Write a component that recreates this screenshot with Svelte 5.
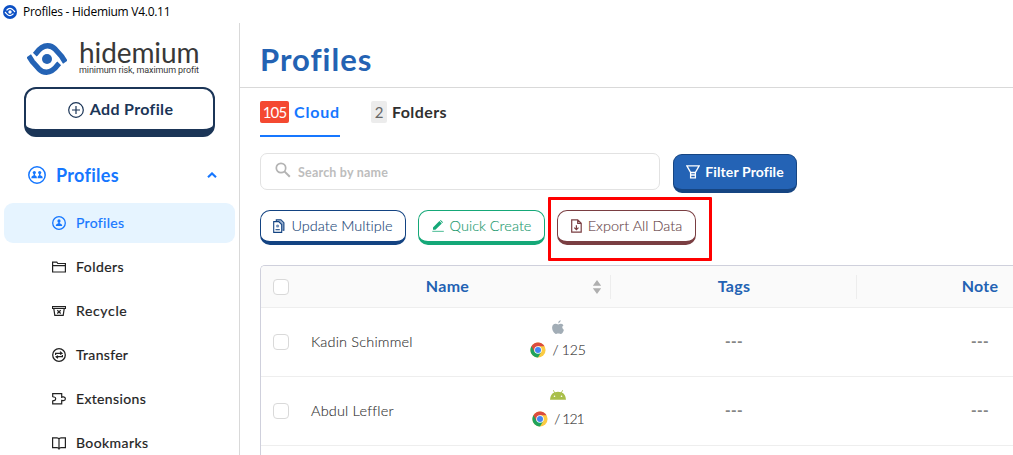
<script>
  const menu = [
    { label: 'Profiles', icon: 'user', active: true, ls: 0.32 },
    { label: 'Folders', icon: 'folder', ls: 0.46 },
    { label: 'Recycle', icon: 'recycle', ls: 0.66 },
    { label: 'Transfer', icon: 'transfer', ls: 0.32 },
    { label: 'Extensions', icon: 'extension', ls: 0.36 },
    { label: 'Bookmarks', icon: 'book', ls: 0.42 }
  ];
  const rows = [
    { name: 'Kadin Schimmel', os: 'apple', version: '125' },
    { name: 'Abdul Leffler', os: 'android', version: '121' }
  ];
</script>

<div class="window">
  <div class="titlebar">
    <svg width="14" height="14" viewBox="0 0 14 14">
      <circle cx="7" cy="7" r="7" fill="#0b4fc4" />
      <g fill="none" stroke="#fff" stroke-width="1.2">
        <path d="M3.5 5.4Q7 1.4 10.3 5.2L12 7M2 7l1.7 1.8Q7 12.4 10.5 8.6" />
      </g>
      <circle cx="7" cy="7" r="1.7" fill="#fff" />
    </svg>
    <span>Profiles - Hidemium V4.0.11</span>
  </div>

  <div class="body">
    <aside>
      <div class="brand">
        <svg width="40" height="32" viewBox="0 0 40 32">
          <g fill="none" stroke="#2463b5" stroke-width="5.4">
            <path d="M7.800 11.600 8.600 10.800Q14.500 2.800 20.500 2.800 25 2.800 28.200 6.200L34.500 13.300 38.300 19.200" stroke-linejoin="round" />
            <path d="M32.200 20.400 31.400 21.200Q25.500 29.200 19.500 29.200 15 29.200 11.800 25.800L5.500 18.700 1.700 12.800" stroke-linejoin="round" />
          </g>
          <circle cx="20" cy="16" r="5" fill="#2463b5" />
        </svg>
        <div class="words">
          <div class="word">hidemium</div>
          <div class="slogan">minimum risk, maximum profit</div>
        </div>
      </div>

      <button class="add">
        <svg width="16" height="16" viewBox="0 0 16 16" fill="none" stroke="#1b3557" stroke-width="1.2">
          <circle cx="8" cy="8" r="7.300" /><path d="M8 4v8M4 8h8" />
        </svg>
        <span>Add Profile</span>
      </button>

      <div class="group">
        <svg width="18" height="18" viewBox="0 0 18 18" fill="#1677ff">
          <circle cx="9" cy="9" r="8.200" fill="none" stroke="#1677ff" stroke-width="1.500" />
          <circle cx="6.300" cy="6.600" r="1.600" /><circle cx="11.700" cy="6.600" r="1.600" />
          <path d="M5.600 7.800h1.400v1.500q2 .4 2 2.900H3.200q0-2.500 2.400-2.900zM11 7.800h1.400v1.500q2.400.4 2.400 2.900H9.500q0-2.500 1.500-2.900z" />
        </svg>
        <span>Profiles</span>
        <svg class="caret" width="10" height="6" viewBox="0 0 10 6" fill="none" stroke="#1677ff" stroke-width="2.100"><path d="M1 5.200 5 1.400 9 5.200" /></svg>
      </div>

      <nav>
        {#each menu as m}
          <div class="item" class:active={m.active}>
            <svg width="14" height="14" viewBox="0 0 14 14" fill="none" stroke="currentColor" stroke-width="1.200">
              {#if m.icon === 'user'}
                <circle cx="7" cy="7" r="6.300" stroke-width="1.300" />
                <circle cx="7" cy="4.900" r="1.600" fill="currentColor" stroke="none" />
                <path d="M6.300 6h1.400v1.300q2.600.4 2.600 2.700H3.700q0-2.300 2.600-2.700z" fill="currentColor" stroke="none" />
              {:else if m.icon === 'folder'}
                <path d="M.6 12V2.200h4.200l1 1.300h7.600V12zM.6 5.600h12.800" />
              {:else if m.icon === 'recycle'}
                <path d="M.4 2.600h13.200v1.900H.4zM1.800 4.600l1 6.800h8.400l1-6.800M5.300 6.200l3.400 3.300M8.700 6.200 5.300 9.500" />
              {:else if m.icon === 'transfer'}
                <circle cx="7" cy="7" r="6.300" stroke-width="1.300" />
                <path d="M3.600 7V5.400h6.200M8 3.600l2 1.800-2 1M10.400 7v1.700H4.200M6 7.700 4.100 8.800 6 10.300" />
              {:else if m.icon === 'extension'}
                <path d="M.7 5V1.700h9v3.200M9.700 8.700v3.200h-9V8.600M.7 5h1.400q1.600.2 1.600 1.800T2.100 8.600H.7M9.700 5.900V4.900h1.700q2 .2 2 1.900t-2 1.900H9.700V7.700" />
              {:else}
                <path d="M7 3Q6.500 1.800 5 1.800H.6v9.800H5q1.500 0 2 1.200.5-1.200 2-1.200h4.400V1.800H9Q7.500 1.800 7 3zv9.500" />
              {/if}
            </svg>
            <span style="letter-spacing: {m.ls}px">{m.label}</span>
          </div>
        {/each}
      </nav>
    </aside>

    <main>
      <header><h1>Profiles</h1></header>

      <div class="tabs">
        <div class="tab on"><b class="count red">105</b><span>Cloud</span></div>
        <div class="tab"><b class="count">2</b><span>Folders</span></div>
      </div>

      <div class="searchrow">
        <div class="search">
          <svg width="16" height="16" viewBox="0 0 16 16" fill="none" stroke="#b3b3b3" stroke-width="1.700"><circle cx="6" cy="6" r="4.700" /><path d="m9.400 9.400 5.400 5.400" stroke-width="2" /></svg>
          <span>Search by name</span>
        </div>
        <button class="filter">
          <svg width="14" height="14" viewBox="0 0 14 14" fill="none" stroke="#fff" stroke-width="1.300"><path d="M.9.9h12.200L9.400 7.300v5.600H4.600V7.300zM4.600 7.500h4.800M4.800 10h4.400" /></svg>
          <span>Filter Profile</span>
        </button>
      </div>

      <div class="actions">
        <button class="act navy">
          <svg width="12" height="14" viewBox="0 0 12 14" fill="none" stroke="#134382" stroke-width="1.100">
            <path d="M3.300 2.500V.7h4.600l3 3v7.600H9.500" fill="#9db2d0" /><path d="M.7 2.600h5l3 3v7.800h-8z" fill="#fff" />
            <circle cx="4.600" cy="7" r="1.600" fill="#718fba" stroke="none" /><path d="M2.500 10.700h4.300" />
          </svg>
          <span>Update Multiple</span>
        </button>
        <button class="act green">
          <svg width="12" height="12" viewBox="0 0 12 12"><path d="M1 9.800V7.400L7.400 1 9.800 3.400 3.400 9.800zM8 .6l.7-.6L11 2.200l-.7.7z" fill="#15a878" /><path d="M.3 11.400h11.500" stroke="#68c7a6" stroke-width="1.200" /></svg>
          <span>Quick Create</span>
        </button>
        <div class="marked">
          <button class="act brown">
            <svg width="11" height="14" viewBox="0 0 11 14" fill="none" stroke="#7a3e42" stroke-width="1.200"><path d="M.7.8h6l3.500 3.500v8.900H.7zM6.700.8v3.500h3.500M5.400 6.200v4.500M3.300 8.600l2.100 2.100 2.100-2.100" /></svg>
            <span>Export All Data</span>
          </button>
        </div>
      </div>

      <div class="table">
        <div class="row head">
          <div class="check"><i></i></div>
          <div class="c-name">
            <span>Name</span>
            <svg width="10" height="14" viewBox="0 0 10 14" fill="#afafaf"><path d="M5 0 9.200 5.800H.8zM5 14 .8 8.200h8.400z" /></svg>
          </div>
          <div class="c-mid"><span>Tags</span></div>
          <div class="c-mid"><span>Note</span></div>
        </div>
        {#each rows as r}
          <div class="row">
            <div class="check"><i></i></div>
            <div class="person">{r.name}</div>
            <div class="device">
              {#if r.os === 'apple'}
                <svg class="os" width="12" height="14" viewBox="0 0 12 14" fill="#a2adb6"><path d="M8.700.1Q8.800 2.900 6.100 3.400 6.100.8 8.700.1zM6.200 4.400Q9.500 2.700 11.500 5.200 8.800 7.300 11.900 10 10.600 13.900 8.700 13.900 7.600 13.900 7.300 13.600 6.300 13.200 5.300 13.600 4.200 14.200 3.300 13.700.1 11.100.1 7.400.5 3.700 3.800 3.800 5 4.100 6.200 4.400z" /></svg>
              {:else if r.os === 'android'}
                <svg class="os droid" width="16" height="10" viewBox="0 0 16 10"><path d="M0 9.700Q.3 4.300 4.200 2.500L2.900.4 3.500 0 4.900 2.200Q8 1.100 11.100 2.200L12.500 0l.6.4-1.300 2.100Q15.700 4.300 16 9.700z" fill="#a9bf49" /><circle cx="4.500" cy="6.200" r=".8" fill="#fff" /><circle cx="11.500" cy="6.200" r=".8" fill="#fff" /></svg>
              {/if}
              <div class="ver" class:slim={r.version === '121'}>
                <svg width="16" height="16" viewBox="0 0 16 16">
                  <circle cx="8" cy="8" r="7.600" fill="#fbcb43" />
                  <path d="M8 8 1.420 4.200A7.600 7.600 0 0 0 8 15.600L11.300 9.900z" fill="#1fa35c" />
                  <path d="M8 8 4.700 9.900 1.420 4.200A7.600 7.600 0 0 1 14.580 4.200H8z" fill="#db4c3f" />
                  <circle cx="8" cy="8" r="3.800" fill="#fff" /><circle cx="8" cy="8" r="3" fill="#4285f4" />
                </svg>
                <span>/ {r.version}</span>
              </div>
            </div>
            <div class="dash">---</div>
            <div class="dash">---</div>
          </div>
        {/each}
      </div>
    </main>
  </div>
</div>

<style>
  :global(body) { margin: 0; background: #fff; }
  * { box-sizing: border-box; }
  .window { width: 1013px; height: 455px; overflow: hidden; background: #fff; display: flex; flex-direction: column; font-family: Lato, sans-serif; color: #222; }
  span { white-space: nowrap; }
  svg { flex: none; display: block; }
  .titlebar { height: 23px; flex: none; display: flex; align-items: center; gap: 6px; padding-left: 3px; font: 12px "Open Sans", sans-serif; color: #000; letter-spacing: -0.27px; }
  .body { flex: 1; min-height: 0; display: flex; }
  aside { width: 240px; flex: none; border-right: 1px solid #d9d9d9; padding-top: 19px; overflow: hidden; }
  .brand { display: flex; padding-left: 27px; height: 45px; }
  .brand > svg { margin-top: 1px; }
  .words { margin-left: 12px; color: #383838; }
  .word { font-size: 28px; line-height: 21px; height: 21px; letter-spacing: -0.1px; white-space: nowrap; }
  .slogan { font: 9px/14px Roboto, sans-serif; white-space: nowrap; letter-spacing: -0.09px; }
  button { font-family: inherit; background: #fff; display: flex; align-items: center; margin: 0; padding: 0; }
  .add { width: 191px; height: 50px; margin-left: 24px; border: 2px solid #1b3557; border-bottom-width: 8px; border-radius: 12px; justify-content: center; gap: 6px; color: #1b3557; font-size: 16px; font-weight: 700; padding: 1px 0 0 2px; letter-spacing: 0.35px; }
  .add span { margin-top: -2px; }
  .group { display: flex; align-items: center; height: 66px; padding: 10px 22px 0 28px; color: #1677ff; font-size: 18px; font-weight: 700; letter-spacing: 0.3px; }
  .group span { margin: -1px 0 0 10px; }
  .caret { margin-left: auto; }
  .item { height: 40px; margin: 0 4px 4px; border-radius: 9px; display: flex; align-items: center; padding-left: 48px; gap: 10px; font-size: 14px; -webkit-text-stroke: 0.2px currentColor; }
  .item span { margin-top: -2px; }
  .item.active { background: #e6f4ff; color: #1677ff; }

  main { flex: 1; min-width: 0; }
  header { height: 65px; border-bottom: 1px solid #d9d9d9; padding: 16px 0 0 20px; }
  h1 { margin: 0; font-size: 31px; line-height: 40px; color: #2362b3; letter-spacing: 1px; }
  .tabs { display: flex; gap: 31px; padding-left: 20px; height: 49px; }
  .tab { display: flex; align-items: center; gap: 5px; height: 49px; padding-top: 1px; font-size: 16px; font-weight: 700; color: #303030; border-bottom: 2px solid transparent; letter-spacing: 0.42px; }
  .tab span { margin-top: -1px; }
  .on { color: #1677ff; border-color: #1677ff; width: 80px; letter-spacing: 0.8px; }
  .count { width: 16px; height: 22px; line-height: 22px; text-align: center; background: #ececec; color: #666; border-radius: 2px; font-size: 15px; font-weight: 400; letter-spacing: 0; }
  .red { background: #f44931; color: #fff; width: 29px; letter-spacing: -0.9px; flex: none; }
  .searchrow { display: flex; padding: 16px 0 0 20px; height: 73px; }
  .search { width: 400px; height: 37px; border: 1px solid #e2e2e2; border-radius: 7px; display: flex; align-items: center; padding-left: 14px; color: #bdbdbd; font-weight: 700; font-size: 12.500px; letter-spacing: 0.2px; }
  .search svg { margin-top: -4px; }
  .search span { margin: 2px 0 0 7px; }
  .filter { margin: 1px 0 0 13px; width: 124px; height: 39px; border: 1px solid #164582; border-bottom-width: 4px; border-radius: 9px; background: #2463b5; color: #fff; justify-content: center; gap: 5px; font-size: 14px; font-weight: 700; letter-spacing: 0.12px; }
  .filter span { margin-top: -2px; }
  .actions { display: flex; gap: 12px; padding-left: 20px; height: 55px; }
  .act { height: 35px; border: 1px solid; border-bottom-width: 4px; border-radius: 10px; justify-content: center; gap: 6px; font-size: 14.500px; font-weight: 300; letter-spacing: 0.02px; -webkit-text-stroke: 0.12px currentColor; }
  .act span { margin-top: -1px; }
  .navy { width: 146px; border-color: #134382; color: #234878; }
  .green { width: 127px; border-color: #15a878; color: #249a70; }
  .marked { width: 164px; height: 64px; margin: -13px 0 0 -9px; border: 3px solid #f00; border-radius: 1px; padding: 10px 0 0 6px; }
  .brown { width: 139px; border-color: #7a3e42; color: #68464a; }

  .table { height: 190px; margin-left: 20px; border: 1px solid #cfd0dc; border-right: 0; border-bottom: 0; border-radius: 5px 0 0; overflow: hidden; }
  .row { display: grid; grid-template-columns: 40px 205px 105px 246px 246px; height: 69px; border-bottom: 1px solid #eee; align-items: center; font-size: 14px; color: #333; }
  .head { grid-template-columns: 40px 310px 246px 246px; height: 42px; background: #fafafa; font-size: 16px; font-weight: 700; color: #2362b3; letter-spacing: 0.3px; }
  .check i { display: block; width: 16px; height: 16px; margin-left: 12px; border: 1px solid #d9d9d9; border-radius: 4px; background: #fff; }
  .c-name { display: flex; align-items: center; height: 24px; border-right: 1px solid #ededed; padding-right: 8px; }
  .c-name span { flex: 1; text-align: center; margin-top: -2px; padding-left: 2px; }
  .c-mid { height: 24px; line-height: 22px; border-right: 1px solid #ededed; text-align: center; padding-left: 1px; }
  .person { padding: 0 0 2px 10px; font-size: 14.500px; font-weight: 300; letter-spacing: 0.18px; -webkit-text-stroke: 0.12px currentColor; }
  .device { display: flex; flex-direction: column; align-items: center; height: 52px; padding-right: 2px; }
  .os { height: 14px; margin-top: 4px; }
  .droid { height: 10px; margin: 5px 0 3px; }
  .ver { display: flex; align-items: center; gap: 6px; height: 20px; margin: 6px 0 0 1px; font-weight: 300; letter-spacing: -0.2px; -webkit-text-stroke: 0.12px currentColor; }
  .ver span { margin-top: -2px; }
  .slim { letter-spacing: -0.95px; }
  .dash { text-align: center; font-size: 15px; font-weight: 900; color: #858585; letter-spacing: 0.4px; padding: 0 0 2px; }
</style>
